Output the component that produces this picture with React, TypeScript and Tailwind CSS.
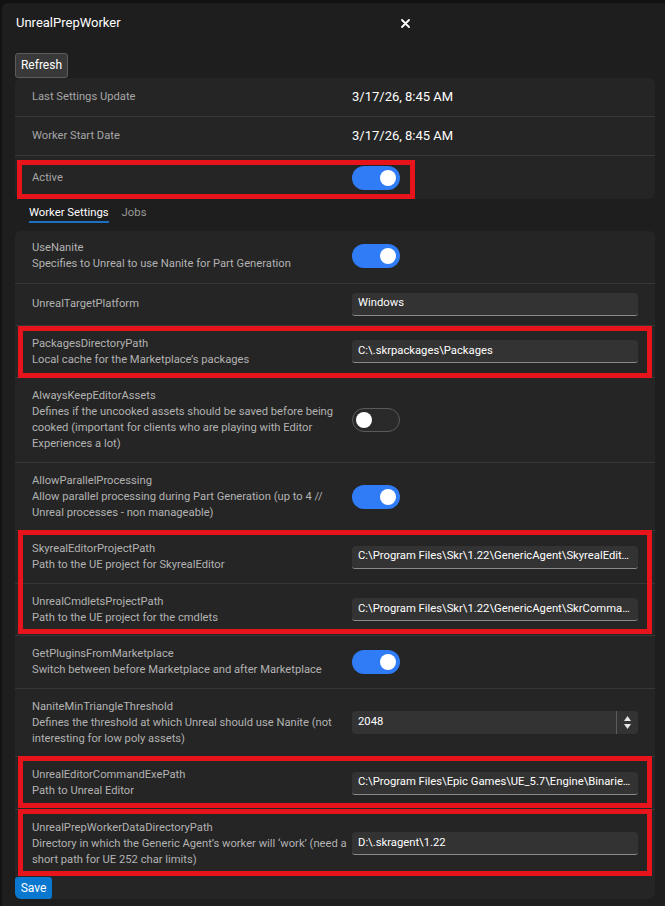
import React from "react";

function Toggle({ on }: { on: boolean }) {
  return on ? (
    <div className="w-[48px] h-[24px] rounded-full bg-[#2f7cf6] flex items-center justify-end pr-[4px]">
      <div className="w-[16px] h-[16px] rounded-full bg-white" />
    </div>
  ) : (
    <div className="w-[48px] h-[24px] rounded-full bg-[#2a2a2a] border border-[#5a5a5a] flex items-center pl-[3px]">
      <div className="w-[16px] h-[16px] rounded-full bg-white" />
    </div>
  );
}

function Field({ value }: { value: string }) {
  return (
    <div className="h-[23px] bg-[#333333] rounded-t-[4px] rounded-b-[3px] border-b border-[#8a8a8a] pl-[6px] pr-[5px] flex items-center text-[11.25px] text-white">
      <span className="truncate">{value}</span>
    </div>
  );
}

function NumberField({ value }: { value: string }) {
  return (
    <div className="h-[23px] bg-[#333333] rounded-[4px] flex items-center text-[11.25px] text-white">
      <span className="flex-1 pl-[6px]">{value}</span>
      <div className="w-[22px] h-full border-l border-[#5c5c5c] flex flex-col items-center justify-center gap-[3px]">
        <svg width="7" height="5" viewBox="0 0 7 5"><path d="M3.5 0 L7 5 L0 5 Z" fill="#e6e6e6" /></svg>
        <svg width="7" height="5" viewBox="0 0 7 5"><path d="M0 0 L7 0 L3.5 5 Z" fill="#e6e6e6" /></svg>
      </div>
    </div>
  );
}

function Row({
  title,
  desc,
  control,
  first,
  pad,
}: {
  title: string;
  desc?: string;
  control: React.ReactNode;
  first?: boolean;
  pad?: string;
}) {
  return (
    <div
      className={
        "grid grid-cols-[318px_286px] gap-x-[2px] items-center pl-[17px] " +
        (pad ? pad : first ? "pt-[9.5px] pb-[10.5px]" : "pt-[10px] pb-[9.5px]") +
        (first ? "" : " border-t border-[#373737]")
      }
    >
      <div className="text-[11.2px] leading-[16px] text-[#b2b2b2]">
        <div>{title}</div>
        {desc && <div>{desc}</div>}
      </div>
      <div>{control}</div>
    </div>
  );
}

function Red({ children, gap }: { children: React.ReactNode; gap?: boolean }) {
  return (
    <div className="relative">
      {children}
      <div
        className={
          "absolute left-[3px] right-[3px] border-[5px] border-[#e8141c] pointer-events-none " +
          (gap ? "top-[0px] bottom-[1px]" : "top-[1px] bottom-[-1px]")
        }
      />
    </div>
  );
}

export default function App() {
  return (
    <div className="min-h-[906px] bg-[#121212] pt-[3px] pl-[2px] font-[Roboto,sans-serif] overflow-hidden">
      <div className="bg-[#1e1e1e] rounded-tl-[6px] min-h-[903px] pl-[13px] pr-[10px]">
        <div className="h-[40px] flex items-center">
          <div className="w-[386px] pl-[1px] text-[13px] text-white">UnrealPrepWorker</div>
          <svg width="9" height="9" viewBox="0 0 9 9">
            <path d="M1 1 L8 8 M8 1 L1 8" stroke="#ffffff" strokeWidth="1.8" strokeLinecap="round" />
          </svg>
        </div>
        <div className="mt-[9px]">
          <button className="h-[25px] w-[53px] bg-[#393939] border border-[#5c5c5c] rounded-[3px] text-[12px] text-white">
            Refresh
          </button>
        </div>
        <div className="bg-[#252525] rounded-[6px]">
          <div className="flex items-center py-[10px] pl-[17px] border-b border-[#383838]">
            <div className="w-[320px] text-[11.2px] leading-[18px] text-[#a6a6a6]">Last Settings Update</div>
            <div className="text-[13px] leading-[18px] text-white">3/17/26, 8:45 AM</div>
          </div>
          <div className="flex items-center py-[10px] pl-[17px] border-b border-[#383838]">
            <div className="w-[320px] text-[11.2px] leading-[18px] text-[#a6a6a6]">Worker Start Date</div>
            <div className="text-[13px] leading-[18px] text-white">3/17/26, 8:45 AM</div>
          </div>
          <div className="relative flex items-center pt-[10px] pb-[9px] pl-[17px]">
            <div className="w-[320px] text-[11.2px] leading-[18px] text-[#a6a6a6]">Active</div>
            <Toggle on />
            <div className="absolute top-[4px] bottom-[0px] left-[2px] w-[398px] border-[5px] border-[#e8141c]" />
          </div>
        </div>
        <div className="mt-[6px] mb-[8px] flex gap-[13px] pl-[14px] text-[11.3px] leading-[16px]">
          <div className="text-white border-b-2 border-[#1d6fc4]">Worker Settings</div>
          <div className="text-[#9a9a9a]">Jobs</div>
        </div>
        <div className="bg-[#252525] rounded-[6px] overflow-hidden">
          <Row first title="UseNanite" desc="Specifies to Unreal to use Nanite for Part Generation" control={<Toggle on />} />
          <Row title="UnrealTargetPlatform" pad="py-[9px]" control={<Field value="Windows" />} />
          <Red>
            <Row
              title="PackagesDirectoryPath"
              desc="Local cache for the Marketplace’s packages"
              control={<Field value="C:\.skrpackages\Packages" />}
            />
          </Red>
          <Row
            title="AlwaysKeepEditorAssets"
            desc="Defines if the uncooked assets should be saved before being cooked (important for clients who are playing with Editor Experiences a lot)"
            control={<Toggle on={false} />}
          />
          <Row
            title="AllowParallelProcessing"
            desc="Allow parallel processing during Part Generation (up to 4 // Unreal processes - non manageable)"
            control={<Toggle on />}
          />
          <Red gap>
            <Row
              title="SkyrealEditorProjectPath"
              desc="Path to the UE project for SkyrealEditor"
              control={<Field value="C:\Program Files\Skr\1.22\GenericAgent\SkyrealEditor\SkyrealEditor.uproject" />}
            />
            <Row
              title="UnrealCmdletsProjectPath"
              desc="Path to the UE project for the cmdlets"
              control={<Field value="C:\Program Files\Skr\1.22\GenericAgent\SkrCommandlets\SkrCommandlets.uproject" />}
            />
          </Red>
          <Row
            title="GetPluginsFromMarketplace"
            desc="Switch between before Marketplace and after Marketplace"
            control={<Toggle on />}
          />
          <Row
            title="NaniteMinTriangleThreshold"
            desc="Defines the threshold at which Unreal should use Nanite (not interesting for low poly assets)"
            control={<NumberField value="2048" />}
          />
          <Red gap>
            <Row
              title="UnrealEditorCommandExePath"
              desc="Path to Unreal Editor"
              control={<Field value="C:\Program Files\Epic Games\UE_5.7\Engine\Binaries\Win64\UnrealEditor-Cmd.exe" />}
            />
          </Red>
          <Red gap>
            <Row
              title="UnrealPrepWorkerDataDirectoryPath"
              desc="Directory in which the Generic Agent’s worker will ‘work’ (need a short path for UE 252 char limits)"
              control={<Field value="D:\.skragent\1.22" />}
            />
          </Red>
          <button className="h-[22px] w-[37px] bg-[#0b78d0] rounded-[3px] text-white text-[12px] block">Save</button>
        </div>
      </div>
    </div>
  );
}
